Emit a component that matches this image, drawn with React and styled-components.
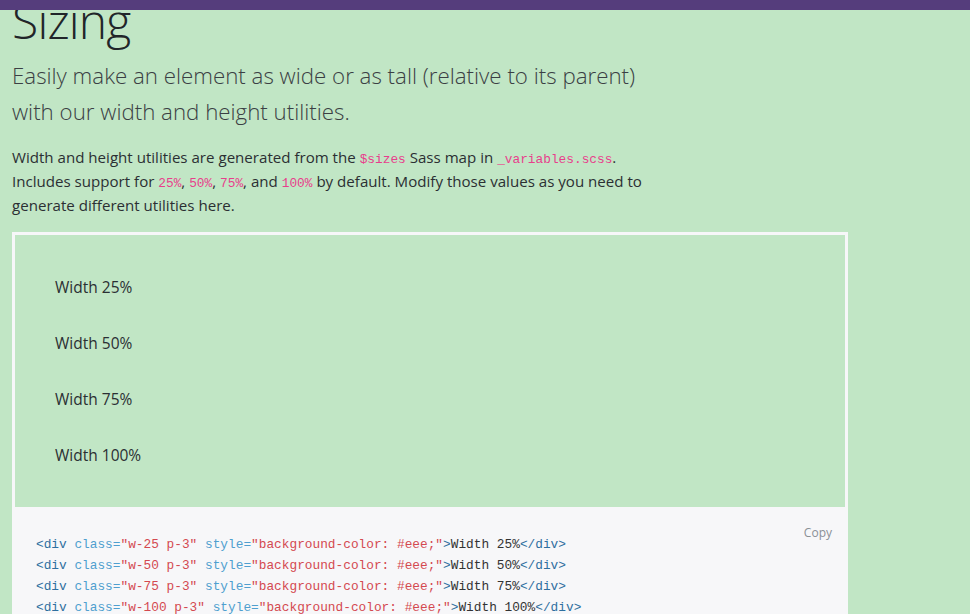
import React from "react";
import styled, { createGlobalStyle } from "styled-components";

const Global = createGlobalStyle`
  html, body {
    margin: 0;
    padding: 0;
    background: #c1e6c5;
  }
  body {
    font-family: "Open Sans", "Noto Sans", sans-serif;
    color: #212529;
    overflow: hidden;
  }
`;

const TopBar = styled.div`
  position: fixed;
  top: 0;
  left: 0;
  right: 0;
  height: 10px;
  background: #553d7c;
  z-index: 10;
`;

const Page = styled.main`
  padding: 0 122px 0 12px;
  margin-top: -8px;
`;

const Title = styled.h1`
  margin: 0 0 8px;
  font-size: 48px;
  line-height: 57.6px;
  font-weight: 300;
  color: #212529;
  letter-spacing: -0.8px;
`;

const Lead = styled.p`
  margin: 0 0 15px;
  max-width: 650px;
  font-size: 22.3px;
  line-height: 36px;
  font-weight: 300;
  color: #3b3f44;
`;

const Text = styled.p`
  margin: 0 0 15px;
  max-width: 650px;
  font-size: 15.1px;
  line-height: 24px;
  color: #2b2f33;
`;

const InlineCode = styled.code`
  font-family: "Liberation Mono", "DejaVu Sans Mono", monospace;
  font-size: 12.8px;
  line-height: 0;
  color: #e83e8c;
`;

const Example = styled.div`
  border: 3px solid #f7f7f9;
  padding: 24px;
`;

const Item = styled.div`
  padding: 16px;
  font-size: 15.5px;
  line-height: 24px;
  color: #2b2f33;
`;

const Highlight = styled.div`
  position: relative;
  background: #f7f7f9;
  padding: 24px;
`;

const CopyButton = styled.button`
  position: absolute;
  top: 12px;
  right: 14px;
  border: 0;
  background: transparent;
  padding: 2px;
  font-family: "Open Sans", "Noto Sans", sans-serif;
  font-size: 12px;
  color: #8a9096;
  cursor: pointer;
`;

const Pre = styled.pre`
  margin: 0;
  font-family: "Liberation Mono", "DejaVu Sans Mono", monospace;
  font-size: 12.8px;
  line-height: 21px;
  color: #333;
`;

const Tag = styled.span`
  color: #2f6f9f;
`;
const Attr = styled.span`
  color: #4f9fcf;
`;
const Str = styled.span`
  color: #d44950;
`;

const widths = ["25", "50", "75", "100"];

function CodeLine({ w }) {
  return (
    <div>
      <Tag>&lt;div</Tag> <Attr>class=</Attr>
      <Str>"w-{w} p-3"</Str> <Attr>style=</Attr>
      <Str>"background-color: #eee;"</Str>
      <Tag>&gt;</Tag>Width {w}%<Tag>&lt;/div&gt;</Tag>
    </div>
  );
}

export default function App() {
  return (
    <>
      <Global />
      <TopBar />
      <Page>
        <Title>Sizing</Title>
        <Lead>
          Easily make an element as wide or as tall (relative to its parent)
          with our width and height utilities.
        </Lead>
        <Text>
          Width and height utilities are generated from the{" "}
          <InlineCode>$sizes</InlineCode> Sass map in{" "}
          <InlineCode>_variables.scss</InlineCode>. Includes support for{" "}
          <InlineCode>25%</InlineCode>, <InlineCode>50%</InlineCode>,{" "}
          <InlineCode>75%</InlineCode>, and <InlineCode>100%</InlineCode> by
          default. Modify those values as you need to generate different
          utilities here.
        </Text>
        <Example>
          {widths.map((w) => (
            <Item key={w}>Width {w}%</Item>
          ))}
        </Example>
        <Highlight>
          <CopyButton>Copy</CopyButton>
          <Pre>
            {widths.map((w) => (
              <CodeLine key={w} w={w} />
            ))}
          </Pre>
        </Highlight>
      </Page>
    </>
  );
}
